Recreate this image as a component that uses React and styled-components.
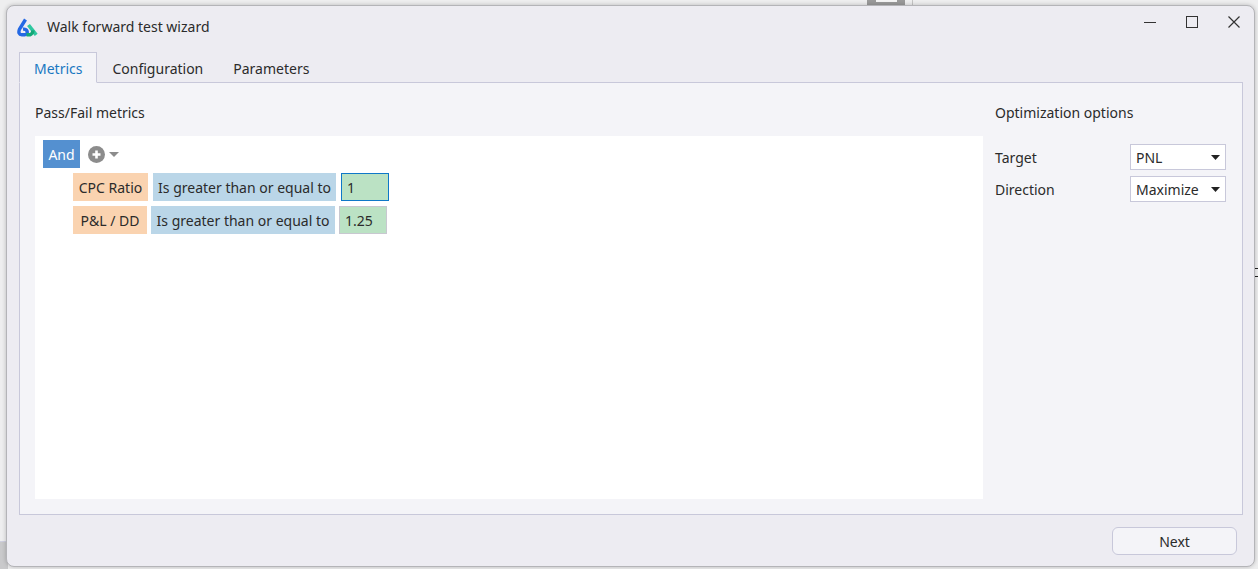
import React from 'react'
import styled, { createGlobalStyle } from 'styled-components'

const GlobalStyle = createGlobalStyle`
  html, body {
    margin: 0;
    padding: 0;
    height: 569px;
    overflow: hidden;
    background: #eeeeef;
    font-family: 'Noto Sans', 'Open Sans', sans-serif;
    font-size: 14px;
    color: #2b2b2b;
  }
`

const rows = [
  { metric: 'CPC Ratio', value: '1', gap: 5, metricWidth: 75, opWidth: 183, focused: true },
  { metric: 'P&L / DD', value: '1.25', gap: 4, metricWidth: 74, opWidth: 184 },
]

const Logo = () => (
  <svg width='21' height='19' viewBox='0 0 21 19' fill='none'>
    <path d='M8.5 1.5 L2.6 11 Q0.4 16.4 5 16.8 L7.6 16.8 Q11 16.4 10 13 Q9 10.8 6 11.2' stroke='#2468e4' strokeWidth='3.4' />
    <path d='M11.5 7 L19.2 16.8' stroke='#2fc7a0' strokeWidth='3.6' />
    <path d='M9.5 16.8 L13 16.8 Q15.6 16 16 12.4' stroke='#14a878' strokeWidth='3.4' />
  </svg>
)

const PlusIcon = () => (
  <svg width='17' height='17' viewBox='0 0 17 17'>
    <circle cx='8.5' cy='8.5' r='8.5' fill='#8c8c8c' />
    <path d='M8.5 4.5v8M4.5 8.5h8' stroke='#fff' strokeWidth='2.6' />
  </svg>
)

const Caret = ({ color = '#8c8c8c', w = 10, h = 5 }) => (
  <svg width={w} height={h} viewBox='0 0 12 6' preserveAspectRatio='none'>
    <path d='M0 0h12L6 6z' fill={color} />
  </svg>
)

const App = () => (
  <>
    <GlobalStyle />
    <BackdropTab />
    <BackdropRule />
    <BackdropTicks />
    <BackdropFooter />
    <Window>
      <TitleBar>
        <Logo />
        <Title>Walk forward test wizard</Title>
        <WindowControls>
          <svg width='12' height='12' viewBox='0 0 12 12'>
            <path d='M0 6.5h12' stroke='#333' strokeWidth='1' />
          </svg>
          <svg width='12' height='12' viewBox='0 0 12 12'>
            <rect x='.5' y='.5' width='11' height='11' fill='none' stroke='#333' strokeWidth='1' />
          </svg>
          <svg width='12' height='12' viewBox='0 0 12 12'>
            <path d='M.5.5l11 11M11.5.5l-11 11' stroke='#333' strokeWidth='1.2' />
          </svg>
        </WindowControls>
      </TitleBar>
      <Tabs>
        <Tab $active>Metrics</Tab>
        <Tab>Configuration</Tab>
        <Tab>Parameters</Tab>
      </Tabs>
      <Panel>
        <MetricsColumn>
          <SectionTitle>Pass/Fail metrics</SectionTitle>
          <RuleBox>
            <GroupRow>
              <AndChip>And</AndChip>
              <AddButton>
                <PlusIcon />
                <Caret />
              </AddButton>
            </GroupRow>
            <RuleList>
              {rows.map((r) => (
                <RuleRow key={r.metric} $gap={r.gap}>
                  <MetricChip $width={r.metricWidth}>{r.metric}</MetricChip>
                  <OperatorChip $width={r.opWidth}>Is greater than or equal to</OperatorChip>
                  <ValueChip $focused={r.focused}>{r.value}</ValueChip>
                </RuleRow>
              ))}
            </RuleList>
          </RuleBox>
        </MetricsColumn>
        <OptionsColumn>
          <SectionTitle>Optimization options</SectionTitle>
          <OptionGrid>
            <OptionLabel>Target</OptionLabel>
            <SelectBox>
              PNL
              <Caret color='#222' w={9} h={5} />
            </SelectBox>
            <OptionLabel>Direction</OptionLabel>
            <SelectBox>
              Maximize
              <Caret color='#222' w={9} h={5} />
            </SelectBox>
          </OptionGrid>
        </OptionsColumn>
      </Panel>
      <Footer>
        <NextButton>Next</NextButton>
      </Footer>
    </Window>
  </>
)

// bits of the app behind the dialog
const BackdropTab = styled.div`
  position: absolute;
  top: 0;
  left: 867px;
  width: 38px;
  height: 5px;
  background: #9a9a9a;
  &::after {
    content: '';
    position: absolute;
    left: 9px;
    top: 0;
    width: 21px;
    height: 2px;
    background: #f4f4f4;
  }
`

const BackdropRule = styled.div`
  position: absolute;
  top: 0;
  left: 912px;
  width: 1px;
  height: 5px;
  background: #c4c4c4;
`

const BackdropTicks = styled.div`
  position: absolute;
  top: 268px;
  left: 1255px;
  width: 3px;
  height: 7px;
  border-top: 1px solid #222;
  border-bottom: 1px solid #222;
`

const BackdropFooter = styled.div`
  position: absolute;
  top: 541px;
  left: 0;
  width: 8px;
  height: 28px;
  background: #c9c9cb;
  border-top: 1px solid #cfcfe0;
`

const Window = styled.div`
  position: relative;
  box-sizing: border-box;
  display: flex;
  flex-direction: column;
  margin: 5px 0 0 6px;
  width: 1249px;
  height: 562px;
  padding: 0 11px 0 12px;
  background: #edecf2;
  border: 1px solid #b4b4b8;
  border-radius: 8px;
  box-shadow: 0 0 4px rgba(0, 0, 0, 0.22);
`

const TitleBar = styled.div`
  display: flex;
  align-items: center;
  height: 42px;
  flex-shrink: 0;
  margin-left: -2px;
`

const Title = styled.div`
  margin: 0 0 2px 9px;
  font-size: 14px;
  color: #2b2b2b;
`

const WindowControls = styled.div`
  display: flex;
  align-items: center;
  gap: 30px;
  margin: 0 3px 10px auto;
`

const Tabs = styled.div`
  display: flex;
  height: 31px;
  margin-top: 4px;
  flex-shrink: 0;
  position: relative;
  z-index: 1;
`

const Tab = styled.div`
  box-sizing: border-box;
  height: 31px;
  padding: 1px 14px 0;
  display: flex;
  align-items: center;
  border: 1px solid ${(p) => (p.$active ? '#c8c8da' : 'transparent')};
  border-bottom: ${(p) => (p.$active ? '1px solid #f4f4f8' : 'none')};
  background: ${(p) => (p.$active ? '#f4f4f8' : 'transparent')};
  color: ${(p) => (p.$active ? '#1a78c2' : '#2b2b2b')};
`

const Panel = styled.div`
  box-sizing: border-box;
  display: flex;
  height: 433px;
  margin-top: -1px;
  padding: 20px 16px 15px 15px;
  background: #f4f4f8;
  border: 1px solid #c8c8da;
`

const MetricsColumn = styled.div`
  display: flex;
  flex-direction: column;
  width: 948px;
  flex-shrink: 0;
`

const SectionTitle = styled.div`
  height: 20px;
  line-height: 20px;
  color: #2b2b2b;
`

const RuleBox = styled.div`
  flex: 1;
  margin-top: 13px;
  padding: 4px 8px;
  background: #fff;
`

const GroupRow = styled.div`
  display: flex;
  align-items: center;
  height: 28px;
`

const Chip = styled.div`
  box-sizing: border-box;
  height: 28px;
  display: flex;
  align-items: center;
  white-space: nowrap;
`

const AndChip = styled(Chip)`
  width: 37px;
  justify-content: center;
  background: #5490d0;
  color: #fff;
`

const AddButton = styled.div`
  display: flex;
  align-items: center;
  gap: 4px;
  margin-left: 8px;
`

const RuleList = styled.div`
  display: flex;
  flex-direction: column;
  gap: 5px;
  margin: 5px 0 0 30px;
`

const RuleRow = styled.div`
  display: flex;
  gap: ${(p) => p.$gap}px;
`

const MetricChip = styled(Chip)`
  width: ${(p) => p.$width}px;
  justify-content: center;
  background: #fad3b0;
`

const OperatorChip = styled(Chip)`
  width: ${(p) => p.$width}px;
  justify-content: center;
  background: #bad6e8;
`

const ValueChip = styled(Chip)`
  width: 48px;
  padding-left: 5px;
  background: #bbe2c4;
  border: 1px solid ${(p) => (p.$focused ? '#0f78c8' : '#c8c8d0')};
`

const OptionsColumn = styled.div`
  display: flex;
  flex-direction: column;
  margin-left: 12px;
  flex: 1;
`

const OptionGrid = styled.div`
  display: grid;
  grid-template-columns: 1fr 96px;
  grid-auto-rows: 26px;
  row-gap: 6px;
  align-items: center;
  margin-top: 21px;
`

const OptionLabel = styled.div`
  margin-top: 0;
`

const SelectBox = styled.div`
  box-sizing: border-box;
  height: 26px;
  display: flex;
  align-items: center;
  justify-content: space-between;
  padding: 0 5px;
  background: #fff;
  border: 1px solid #c8c8da;
`

const Footer = styled.div`
  display: flex;
  justify-content: flex-end;
  padding-top: 12px;
`

const NextButton = styled.div`
  box-sizing: border-box;
  width: 125px;
  height: 28px;
  margin-right: 6px;
  display: flex;
  align-items: center;
  justify-content: center;
  background: #f4f4f8;
  border: 1px solid #c8c8da;
  border-radius: 6px;
`

export default App
